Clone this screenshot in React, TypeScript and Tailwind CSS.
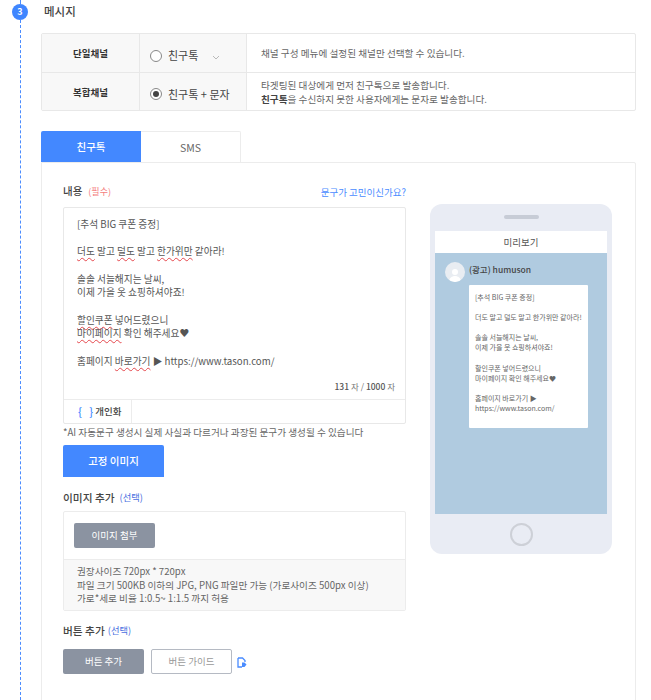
import React from "react";

const W = ({ children }: { children: React.ReactNode }) => (
  <span className="underline decoration-wavy decoration-[#e5484d] decoration-1 underline-offset-2">{children}</span>
);

function ChannelRow({ title, radio, checked, chevron, children, last }: { title: string; radio: string; checked?: boolean; chevron?: boolean; children: React.ReactNode; last?: boolean }) {
  return (
    <div className={`flex ${last ? "h-[37px]" : "h-[39px] border-b border-[#e8e8e8]"}`}>
      <div className="flex w-[98px] items-center justify-center border-r border-[#e8e8e8] bg-[#f8f8f8] pt-[1px] text-[9.5px] font-bold text-[#333]">{title}</div>
      <div className="flex w-[107px] items-center gap-[6px] border-r border-[#e8e8e8] bg-[#f8f8f8] pl-[10px] pt-[5px] text-[11px] text-[#444]">
        <span className="flex h-[12px] w-[12px] shrink-0 items-center justify-center rounded-full border border-[#888] bg-white">
          {checked && <span className="h-[6px] w-[6px] rounded-full bg-[#444]" />}
        </span>
        <span className="whitespace-nowrap">{radio}</span>
        {chevron && (
          <svg className="ml-[8px] mt-[4px]" width="8" height="5" viewBox="0 0 8 5" fill="none" stroke="#aaa" strokeWidth="0.8"><path d="M1 1l3 3 3-3" /></svg>
        )}
      </div>
      <div className="flex flex-1 flex-col justify-center pl-[14px] pt-[2px] text-[9.65px] leading-[13.5px] text-[#666]">{children}</div>
    </div>
  );
}

export default function App() {
  return (
    <div className="flex h-[700px] w-[651px] overflow-hidden bg-white text-[#333] [font-family:'Noto_Sans_CJK_KR','Noto_Sans',sans-serif]">
      {/* step rail */}
      <div className="flex w-[41px] shrink-0 flex-col items-center pr-[1px]">
        <div className="h-[4px] border-l border-dashed border-[#4a8cff]" />
        <div className="flex h-[16px] w-[16px] shrink-0 items-center justify-center rounded-full bg-[#3f86ff] text-[9px] font-bold text-white">3</div>
        <div className="flex-1 border-l border-dashed border-[#4a8cff]" />
      </div>

      <div className="w-[595px] shrink-0">
        <div className="ml-[3px] h-[33px] pt-[2px] text-[11.5px] font-medium leading-[18px] text-[#444]">메시지</div>

        {/* channel table */}
        <div className="overflow-hidden rounded-[2px] border border-[#e8e8e8]">
          <ChannelRow title="단일채널" radio="친구톡" chevron>
            <p>채널 구성 메뉴에 설정된 채널만 선택할 수 있습니다.</p>
          </ChannelRow>
          <ChannelRow title="복합채널" radio="친구톡 + 문자" checked last>
            <p>타겟팅된 대상에게 먼저 친구톡으로 발송합니다.</p>
            <p><b className="font-bold text-[#444]">친구톡</b>을 수신하지 못한 사용자에게는 문자로 발송합니다.</p>
          </ChannelRow>
        </div>

        {/* tabs */}
        <div className="mt-[20px] flex h-[31px] text-[10.5px]">
          <div className="flex w-[100px] items-center justify-center rounded-tl-[2px] bg-[#4388ff] pt-[1px] font-medium text-white">친구톡</div>
          <div className="flex w-[100px] items-center justify-center rounded-tr-[2px] border border-b-0 border-l-0 border-[#ececec] pt-[1px] text-[#666]">SMS</div>
        </div>

        {/* panel */}
        <div className="flex h-[560px] justify-between rounded-tr-[2px] border border-[#ececec] pl-[21px] pr-[23px]">
          <div className="w-[343px]">
            <div className="flex h-[44px] items-end justify-between pb-[8px]">
              <div className="flex items-baseline gap-[6px]">
                <span className="text-[10.5px] font-medium text-[#444]">내용</span>
                <span className="text-[9px] text-[#f47c7c]">(필수)</span>
              </div>
              <span className="text-[9.5px] text-[#4a8cff]">문구가 고민이신가요?</span>
            </div>

            <div className="h-[217px] rounded-[2px] border border-[#e8e8e8]">
              <div className="h-[191px] pl-[13px] pr-[10px] pt-[10px] text-[9.7px] leading-[13.65px] text-[#555]">
                <p>[추석 BIG 쿠폰 증정]</p>
                <p>&nbsp;</p>
                <p><W>더도</W> 말고 <W>덜도</W> 말고 <W>한가위만</W> 같아라!</p>
                <p>&nbsp;</p>
                <p>솔솔 서늘해지는 날씨,</p>
                <p>이제 가을 옷 쇼핑하셔야죠!</p>
                <p>&nbsp;</p>
                <p><W>할인쿠폰</W> 넣어드렸으니</p>
                <p><W>마이페이지</W> 확인 해주세요♥</p>
                <p>&nbsp;</p>
                <p>홈페이지 <W>바로가기</W> ▶ https://www.tason.com/</p>
                <p className="mt-[12px] text-right text-[8.5px] text-[#777]"><b className="font-medium text-[#555]">131</b> 자 / <b className="font-medium text-[#555]">1000</b> 자</p>
              </div>
              <div className="flex h-[24px] border-t border-[#ececec]">
                <div className="flex w-[68px] items-center border-r border-[#ececec] pl-[14px] text-[9.5px] font-medium text-[#444]">
                  <span className="mr-[2px] text-[11px] text-[#4a8cff]">{"{"}&nbsp;&nbsp;&nbsp;{"}"}</span>개인화
                </div>
              </div>
            </div>

            <p className="mt-[1px] text-[9.64px] leading-[14px] text-[#666]">*AI 자동문구 생성시 실제 사실과 다르거나 과장된 문구가 생성될 수 있습니다</p>

            <div className="mt-[6px] flex h-[32px] w-[101px] items-center justify-center rounded-t-[2px] bg-[#4388ff] text-[10.5px] font-medium text-white">고정 이미지</div>

            <div className="mt-[13px] flex h-[16px] items-center gap-[5px]">
              <span className="text-[10.7px] font-medium text-[#444]">이미지 추가</span>
              <span className="text-[9.3px] text-[#4a6fe0]">(선택)</span>
            </div>

            <div className="mt-[5px] rounded-[2px] border border-[#ececec]">
              <div className="h-[47px] pl-[10px] pt-[11px]">
                <div className="flex h-[25px] w-[81px] items-center justify-center rounded-[2px] bg-[#8b93a1] text-[9.5px] text-white">이미지 첨부</div>
              </div>
              <div className="h-[51px] border-t border-[#ececec] bg-[#f8f8f8] pl-[13px] pt-[5px] text-[9.65px] leading-[13.5px] text-[#666]">
                <p>권장사이즈 720px * 720px</p>
                <p>파일 크기 500KB 이하의 JPG, PNG 파일만 가능 (가로사이즈 500px 이상)</p>
                <p>가로*세로 비율 1:0.5~ 1:1.5 까지 허용</p>
              </div>
            </div>

            <div className="mt-[12px] flex h-[16px] items-center gap-[3px]">
              <span className="text-[10.7px] font-medium text-[#444]">버튼 추가</span>
              <span className="text-[9.3px] text-[#4a6fe0]">(선택)</span>
            </div>

            <div className="mt-[10px] flex items-center">
              <div className="flex h-[25px] w-[81px] items-center justify-center rounded-[2px] bg-[#8b93a1] text-[9.5px] text-white">버튼 추가</div>
              <div className="ml-[7px] flex h-[25px] w-[81px] items-center justify-center rounded-[2px] border border-[#b5bac3] text-[9.5px] text-[#999]">버튼 가이드</div>
              <svg className="ml-[5px] mt-[1px]" width="10" height="11" viewBox="0 0 10 11" fill="none">
                <path d="M1 1h4.5L8 3.5V5" stroke="#4a8cff" strokeWidth="1.3" />
                <path d="M1 1v9h4" stroke="#4a8cff" strokeWidth="1.3" />
                <path d="M5 5.5h2.5l2 2-2 2.5H5z" fill="#4a8cff" />
              </svg>
            </div>
          </div>

          {/* phone preview */}
          <div className="mt-[41px] flex h-[350px] w-[182px] flex-col rounded-[12px] bg-[#e9ecf4] px-[5px]">
            <div className="flex h-[27px] shrink-0 items-center justify-center pb-[1px]">
              <div className="h-[4px] w-[35px] rounded-full bg-[#c7ccd6]" />
            </div>
            <div className="flex h-[22px] shrink-0 items-center justify-center bg-white text-[9.5px] text-[#555]">미리보기</div>
            <div className="h-[261px] bg-[#b0cbe0] pl-[34px]">
              <div className="relative flex h-[32px] items-center text-[8.5px] font-medium text-[#444]">
                (광고) humuson
                <div className="absolute left-[-24px] top-[9px] flex h-[20px] w-[20px] items-end justify-center overflow-hidden rounded-full bg-[#e9edf2]">
                  <svg width="14" height="16" viewBox="0 0 14 16"><circle cx="7" cy="6" r="3" fill="#fff" /><path d="M1 16c0-4 3-6 6-6s6 2 6 6z" fill="#fff" /></svg>
                </div>
              </div>
              <div className="h-[143px] w-[119px] rounded-[1px] bg-white pl-[6px] pt-[7px] text-[7px] leading-[10.1px] text-[#666]">
                <p>[추석 BIG 쿠폰 증정]</p>
                <p>&nbsp;</p>
                <p>더도 말고 덜도 말고 한가위만 같아라!</p>
                <p>&nbsp;</p>
                <p>솔솔 서늘해지는 날씨,</p>
                <p>이제 가을 옷 쇼핑하셔야죠!</p>
                <p>&nbsp;</p>
                <p>할인쿠폰 넣어드렸으니</p>
                <p>마이페이지 확인 해주세요♥</p>
                <p>&nbsp;</p>
                <p>홈페이지 바로가기 ▶</p>
                <p>https://www.tason.com/</p>
              </div>
            </div>
            <div className="flex flex-1 items-center justify-center">
              <div className="h-[23px] w-[23px] rounded-full border-2 border-[#cdd0d7]" />
            </div>
          </div>
        </div>
      </div>
    </div>
  );
}
